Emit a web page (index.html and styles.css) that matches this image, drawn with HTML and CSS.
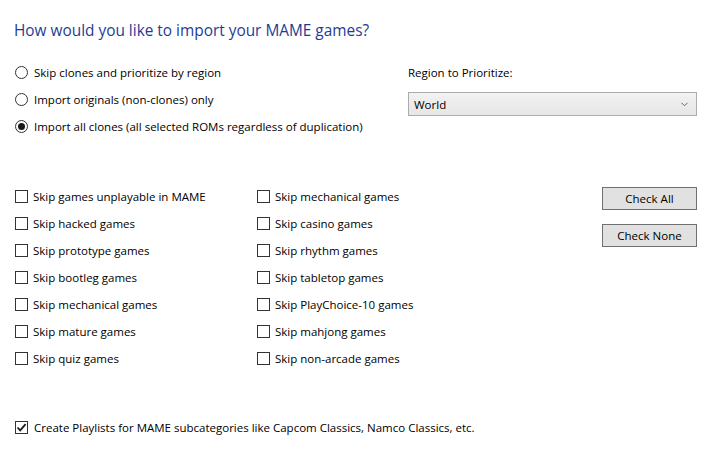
FILE: index.html
```html
<!DOCTYPE html>
<html>
<head>
<meta charset="utf-8">
<link rel="stylesheet" href="styles.css">
</head>
<body>
<div class="page">
  <h1 class="title">How would you like to import your MAME games?</h1>
  <div class="top">
    <div class="radios">
      <div class="row"><span class="radio"></span><span>Skip clones and prioritize by region</span></div>
      <div class="row"><span class="radio"></span><span>Import originals (non-clones) only</span></div>
      <div class="row"><span class="radio on"></span><span>Import all clones (all selected ROMs regardless of duplication)</span></div>
    </div>
    <div class="region">
      <div class="row">Region to Prioritize:</div>
      <div class="combo"><span>World</span>
        <svg class="chev" width="7" height="5" viewBox="0 0 7 5"><path d="M0.5 0.8 L3.5 3.8 L6.5 0.8" fill="none" stroke="#6a6a6a" stroke-width="1"/></svg>
      </div>
    </div>
  </div>
  <div class="opts">
    <div class="col">
      <div class="row"><span class="box"></span><span>Skip games unplayable in MAME</span></div>
      <div class="row"><span class="box"></span><span>Skip hacked games</span></div>
      <div class="row"><span class="box"></span><span>Skip prototype games</span></div>
      <div class="row"><span class="box"></span><span>Skip bootleg games</span></div>
      <div class="row"><span class="box"></span><span>Skip mechanical games</span></div>
      <div class="row"><span class="box"></span><span>Skip mature games</span></div>
      <div class="row"><span class="box"></span><span>Skip quiz games</span></div>
    </div>
    <div class="col col2">
      <div class="row"><span class="box"></span><span>Skip mechanical games</span></div>
      <div class="row"><span class="box"></span><span>Skip casino games</span></div>
      <div class="row"><span class="box"></span><span>Skip rhythm games</span></div>
      <div class="row"><span class="box"></span><span>Skip tabletop games</span></div>
      <div class="row"><span class="box"></span><span>Skip PlayChoice-10 games</span></div>
      <div class="row"><span class="box"></span><span>Skip mahjong games</span></div>
      <div class="row"><span class="box"></span><span>Skip non-arcade games</span></div>
    </div>
    <div class="buttons">
      <div class="btn">Check All</div>
      <div class="btn">Check None</div>
    </div>
  </div>
  <div class="bottom">
    <div class="row"><span class="box checked"><svg width="11" height="11" viewBox="0 0 11 11"><path d="M1.5 5.5 L4.2 8.3 L9.6 2.2" fill="none" stroke="#1a1a1a" stroke-width="1.8"/></svg></span><span>Create Playlists for MAME subcategories like Capcom Classics, Namco Classics, etc.</span></div>
  </div>
</div>
</body>
</html>
```
FILE: styles.css
```css
html, body {
  margin: 0;
  padding: 0;
  background: #ffffff;
}
body {
  font-family: "Open Sans", "Noto Sans", sans-serif;
  font-size: 11.5px;
  color: #000000;
  width: 719px;
  height: 462px;
  overflow: hidden;
}
.page {
  padding: 21px 22px 0 15px;
}
.title {
  margin: 0 0 18px -1px;
  font-size: 15.4px;
  font-weight: normal;
  line-height: 20px;
  color: #1e3c96;
}
.top {
  display: flex;
}
.radios {
  width: 393px;
}
.row {
  height: 27px;
  display: flex;
  align-items: center;
  white-space: nowrap;
}
.radio {
  width: 11px;
  height: 11px;
  border: 1px solid #333333;
  border-radius: 50%;
  margin-right: 6px;
  position: relative;
  flex: none;
}
.radio.on::after {
  content: "";
  position: absolute;
  left: 2px;
  top: 2px;
  width: 7px;
  height: 7px;
  border-radius: 50%;
  background: #1a1a1a;
}
.region {
  flex: 1;
}
.combo {
  margin-top: 6px;
  height: 22px;
  border: 1px solid #acacac;
  background: linear-gradient(#f2f2f2, #e6e6e6);
  display: flex;
  align-items: center;
  justify-content: space-between;
  padding: 0 8px 0 5px;
}
.chev {
  margin-top: 1px;
}
.opts {
  margin-top: 43px;
  display: flex;
}
.col {
  width: 242px;
}
.col2 {
  width: 345px;
}
.box {
  width: 11px;
  height: 11px;
  border: 1px solid #333333;
  margin-right: 6px;
  flex: none;
  display: flex;
  align-items: center;
  justify-content: center;
}
.col .box {
  margin-right: 5px;
}
.buttons {
  padding-top: 4px;
  display: flex;
  flex-direction: column;
  gap: 14px;
  flex: 1;
}
.btn {
  height: 21px;
  border: 1px solid #707070;
  background: #e1e1e1;
  display: flex;
  align-items: center;
  justify-content: center;
}
.bottom {
  margin-top: 42px;
}
.box.checked {
  margin-right: 6px;
}
```
